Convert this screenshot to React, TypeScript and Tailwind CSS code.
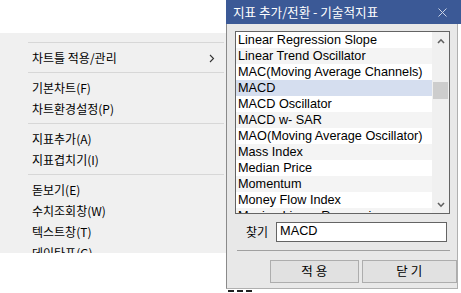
import React from "react";

const KR = { fontFamily: '"Noto Sans CJK KR", "Noto Sans", sans-serif' };
const LAT = { fontFamily: '"Liberation Sans", Arial, "Noto Sans CJK KR", sans-serif' };

function Sep() {
  return (
    <div className="flex h-[9px] items-center">
      <div className="h-px w-full bg-[#d7d7d7]" />
    </div>
  );
}

function Item({ label, arrow }: { label: string; arrow?: boolean }) {
  return (
    <div className="flex h-[21px] items-center justify-between pl-[4px] pr-[9px] text-[12px] leading-none text-black">
      <span>{label}</span>
      {arrow && (
        <svg width="6" height="9" viewBox="0 0 6 9" className="mt-[1px]">
          <path d="M1 1 L4.5 4.5 L1 8" stroke="#333" strokeWidth="1.1" fill="none" />
        </svg>
      )}
    </div>
  );
}

const rows = [
  "Linear Regression Slope",
  "Linear Trend Oscillator",
  "MAC(Moving Average Channels)",
  "MACD",
  "MACD Oscillator",
  "MACD w- SAR",
  "MAO(Moving Average Oscillator)",
  "Mass Index",
  "Median Price",
  "Momentum",
  "Money Flow Index",
  "Moving Linear Regression",
];

export default function App() {
  return (
    <div className="flex h-[293px] w-[461px] overflow-hidden bg-white" style={KR}>
      {/* Context menu column */}
      <div className="flex w-[226px] flex-col">
        <div className="h-[33px] bg-white" />
        <div className="h-[220px] overflow-hidden bg-[#f0f0f0] pl-[28px] pr-[2px] pt-[5px]">
          <Sep />
          <Item label="차트틀 적용/관리" arrow />
          <Sep />
          <Item label="기본차트(F)" />
          <Item label="차트환경설정(P)" />
          <Sep />
          <Item label="지표추가(A)" />
          <Item label="지표겹치기(I)" />
          <Sep />
          <Item label="돋보기(E)" />
          <Item label="수치조회창(W)" />
          <Item label="텍스트창(T)" />
          <Item label="데이타표(G)" />
        </div>
      </div>

      {/* Dialog */}
      <div className="flex w-[235px] flex-col">
        <div className="flex h-[24px] items-center justify-between bg-[#3b5996] pl-[7px] pr-[14px]">
          <span className="text-[12.6px] leading-none text-white">지표 추가/전환 - 기술적지표</span>
          <svg width="9" height="9" viewBox="0 0 9 9">
            <path d="M0.5 0.5 L8.5 8.5 M8.5 0.5 L0.5 8.5" stroke="#c9d2e6" strokeWidth="1" />
          </svg>
        </div>
        <div className="flex h-[265px]">
          <div className="flex w-[232px] flex-col border-l border-r border-b border-l-[#8a8a8a] border-r-[#b0b0b0] border-b-[#b0b0b0] bg-[#e8e8e8]">
            {/* List box */}
            <div className="ml-[8px] mt-[7px] flex h-[183px] w-[215px] border border-[#646464] bg-white">
              <div className="block h-[181px] w-[196px] overflow-hidden" style={LAT}>
                {rows.map((r, i) => (
                  <div
                    key={r}
                    className={
                      "block h-[16px] overflow-hidden whitespace-nowrap pl-[2px] text-[12.7px] leading-[16px] text-black " +
                      (i === 3 ? "bg-[#d5deef]" : i % 2 === 1 ? "bg-[#f4f4f4]" : "bg-white")
                    }
                  >
                    {r}
                  </div>
                ))}
              </div>
              <div className="flex w-[17px] flex-col bg-[#f0f0f0]">
                <div className="flex h-[17px] items-center justify-center">
                  <svg width="8" height="6" viewBox="0 0 8 6">
                    <path d="M1 5 L4 1.8 L7 5" stroke="#606060" strokeWidth="1.6" fill="none" />
                  </svg>
                </div>
                <div className="h-[33px]" />
                <div className="ml-[1px] h-[17px] w-[15px] bg-[#cdcdcd]" />
                <div className="flex-1" />
                <div className="flex h-[17px] items-center justify-center">
                  <svg width="8" height="6" viewBox="0 0 8 6">
                    <path d="M1 1 L4 4.2 L7 1" stroke="#606060" strokeWidth="1.6" fill="none" />
                  </svg>
                </div>
              </div>
            </div>

            {/* Find row */}
            <div className="mt-[8px] flex h-[20px] items-center">
              <span className="ml-[19px] mr-[8px] text-[12px] leading-none text-black">찾기</span>
              <div className="flex h-[20px] w-[171px] items-start border border-[#646464] bg-white pl-[3px] pt-[1px]">
                <span className="text-[12.7px] leading-[14px] text-black" style={LAT}>MACD</span>
              </div>
            </div>

            {/* Separator */}
            <div className="ml-[10px] mt-[8px] h-px w-[213px] bg-[#a0a0a0]" />

            {/* Buttons */}
            <div className="mt-[9px] flex gap-[3px] pl-[43px]">
              <div className="flex h-[23px] w-[89px] items-center justify-center border border-[#adadad] bg-[#e1e1e1] text-[12.5px] leading-none text-black">
                적 용
              </div>
              <div className="flex h-[23px] w-[96px] items-center justify-center border border-[#adadad] bg-[#e1e1e1] text-[12.5px] leading-none text-black">
                닫 기
              </div>
            </div>
          </div>
          <div className="w-[3px] bg-white" />
        </div>
        <div className="flex gap-[3px] pl-[2px] pt-[1px]">
          <div className="h-[2px] w-[6px] bg-[#222]" />
          <div className="h-[2px] w-[6px] bg-[#222]" />
          <div className="h-[2px] w-[6px] bg-[#222]" />
        </div>
      </div>
    </div>
  );
}
